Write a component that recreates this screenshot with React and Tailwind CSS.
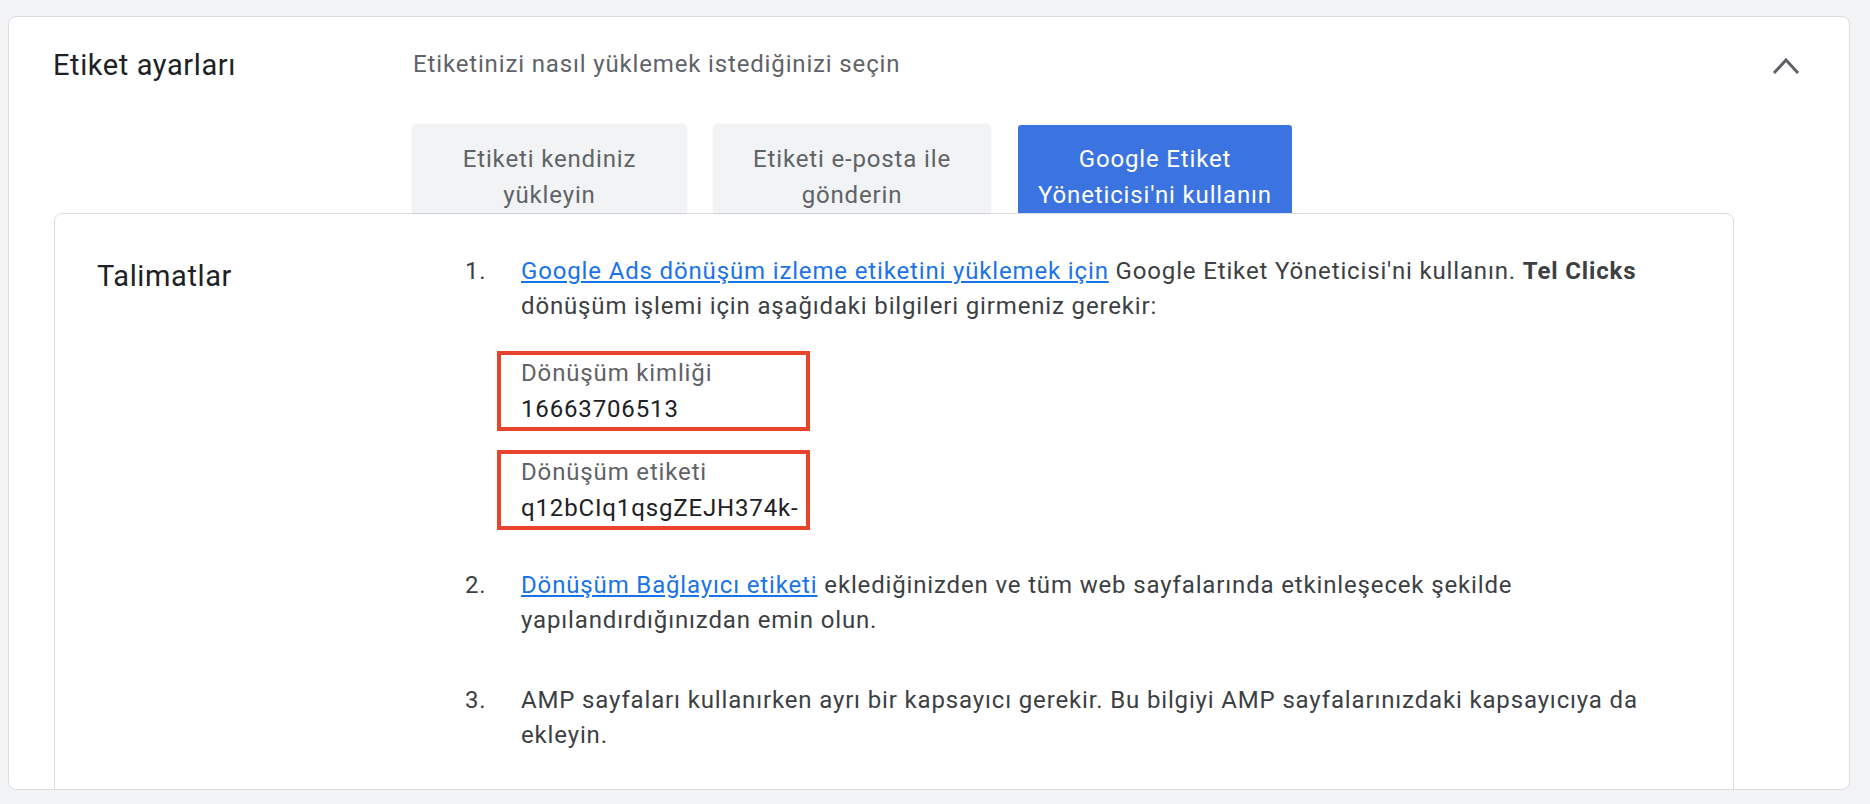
export default function App() {
  const f = { fontFamily: "Roboto, 'Noto Sans', sans-serif" };
  return (
    <div style={f} className="w-[1870px] h-[804px] bg-[#f1f3f4] pt-[16px] pl-[8px] overflow-hidden tracking-[0.85px]">
      <div className="w-[1842px] h-[774px] bg-white border border-[#dadce0] rounded-[8px] overflow-hidden">
        <div className="flex pt-[28px]">
          <div className="w-[360px] ml-[44px] text-[29px] leading-[40px] text-[#202124] tracking-[0.6px]">Etiket ayarları</div>
          <div className="flex flex-col">
            <div className="text-[24px] leading-[34px] text-[#5f6368] mt-[2px]">Etiketinizi nasıl yüklemek istediğinizi seçin</div>
            <div className="flex gap-[28px] mt-[44px]">
              <div className="w-[273px] h-[88px] pt-[16px] bg-[#f1f3f4] text-[#5f6368] text-[24px] leading-[36px] text-center rounded-t-[3px] shadow-[0_0_3px_rgba(0,0,0,0.15)] overflow-hidden">Etiketi kendiniz<br />yükleyin</div>
              <div className="w-[276px] h-[88px] pt-[16px] bg-[#f1f3f4] text-[#5f6368] text-[24px] leading-[36px] text-center rounded-t-[3px] shadow-[0_0_3px_rgba(0,0,0,0.15)] overflow-hidden">Etiketi e-posta ile<br />gönderin</div>
              <div className="w-[274px] h-[88px] pt-[16px] bg-[#3b73e0] text-white text-[24px] leading-[36px] text-center rounded-t-[3px] overflow-hidden whitespace-nowrap">Google Etiket<br />Yöneticisi'ni kullanın</div>
            </div>
          </div>
          <div className="ml-auto mr-[49px] mt-[12px]">
            <svg width="28" height="18" viewBox="0 0 28 18"><path d="M2 16 L14 3 L26 16" fill="none" stroke="#5f6368" strokeWidth="3" /></svg>
          </div>
        </div>
        <div className="ml-[45px] w-[1680px] h-[600px] border border-[#dadce0] rounded-t-[8px] flex pt-[40px] pl-[42px]">
          <div className="w-[368px] text-[29px] leading-[40px] text-[#202124] mt-[2px] tracking-[0.6px]">Talimatlar</div>
          <div className="w-[1180px] text-[24px] leading-[35px] text-[#3c4043]">
            <div className="flex">
              <div className="w-[56px] shrink-0">1.</div>
              <div>
                <div><a className="text-[#1a73e8] underline">Google Ads dönüşüm izleme etiketini yüklemek için</a> Google Etiket Yöneticisi'ni kullanın. <b>Tel Clicks</b> dönüşüm işlemi için aşağıdaki bilgileri girmeniz gerekir:</div>
                <div className="-ml-[24px] mt-[27px] w-[313px] border-4 border-[#e8432d] pl-[20px] leading-[36px]">
                  <div className="text-[#5f6368]">Dönüşüm kimliği</div>
                  <div className="text-[#202124]">16663706513</div>
                </div>
                <div className="-ml-[24px] mt-[19px] w-[313px] border-4 border-[#e8432d] pl-[20px] leading-[36px] whitespace-nowrap overflow-hidden">
                  <div className="text-[#5f6368]">Dönüşüm etiketi</div>
                  <div className="text-[#202124]">q12bCIq1qsgZEJH374k-</div>
                </div>
              </div>
            </div>
            <div className="flex mt-[38px]">
              <div className="w-[56px] shrink-0">2.</div>
              <div><a className="text-[#1a73e8] underline">Dönüşüm Bağlayıcı etiketi</a> eklediğinizden ve tüm web sayfalarında etkinleşecek şekilde yapılandırdığınızdan emin olun.</div>
            </div>
            <div className="flex mt-[45px]">
              <div className="w-[56px] shrink-0">3.</div>
              <div>AMP sayfaları kullanırken ayrı bir kapsayıcı gerekir. Bu bilgiyi AMP sayfalarınızdaki kapsayıcıya da ekleyin.</div>
            </div>
          </div>
        </div>
      </div>
    </div>
  );
}
